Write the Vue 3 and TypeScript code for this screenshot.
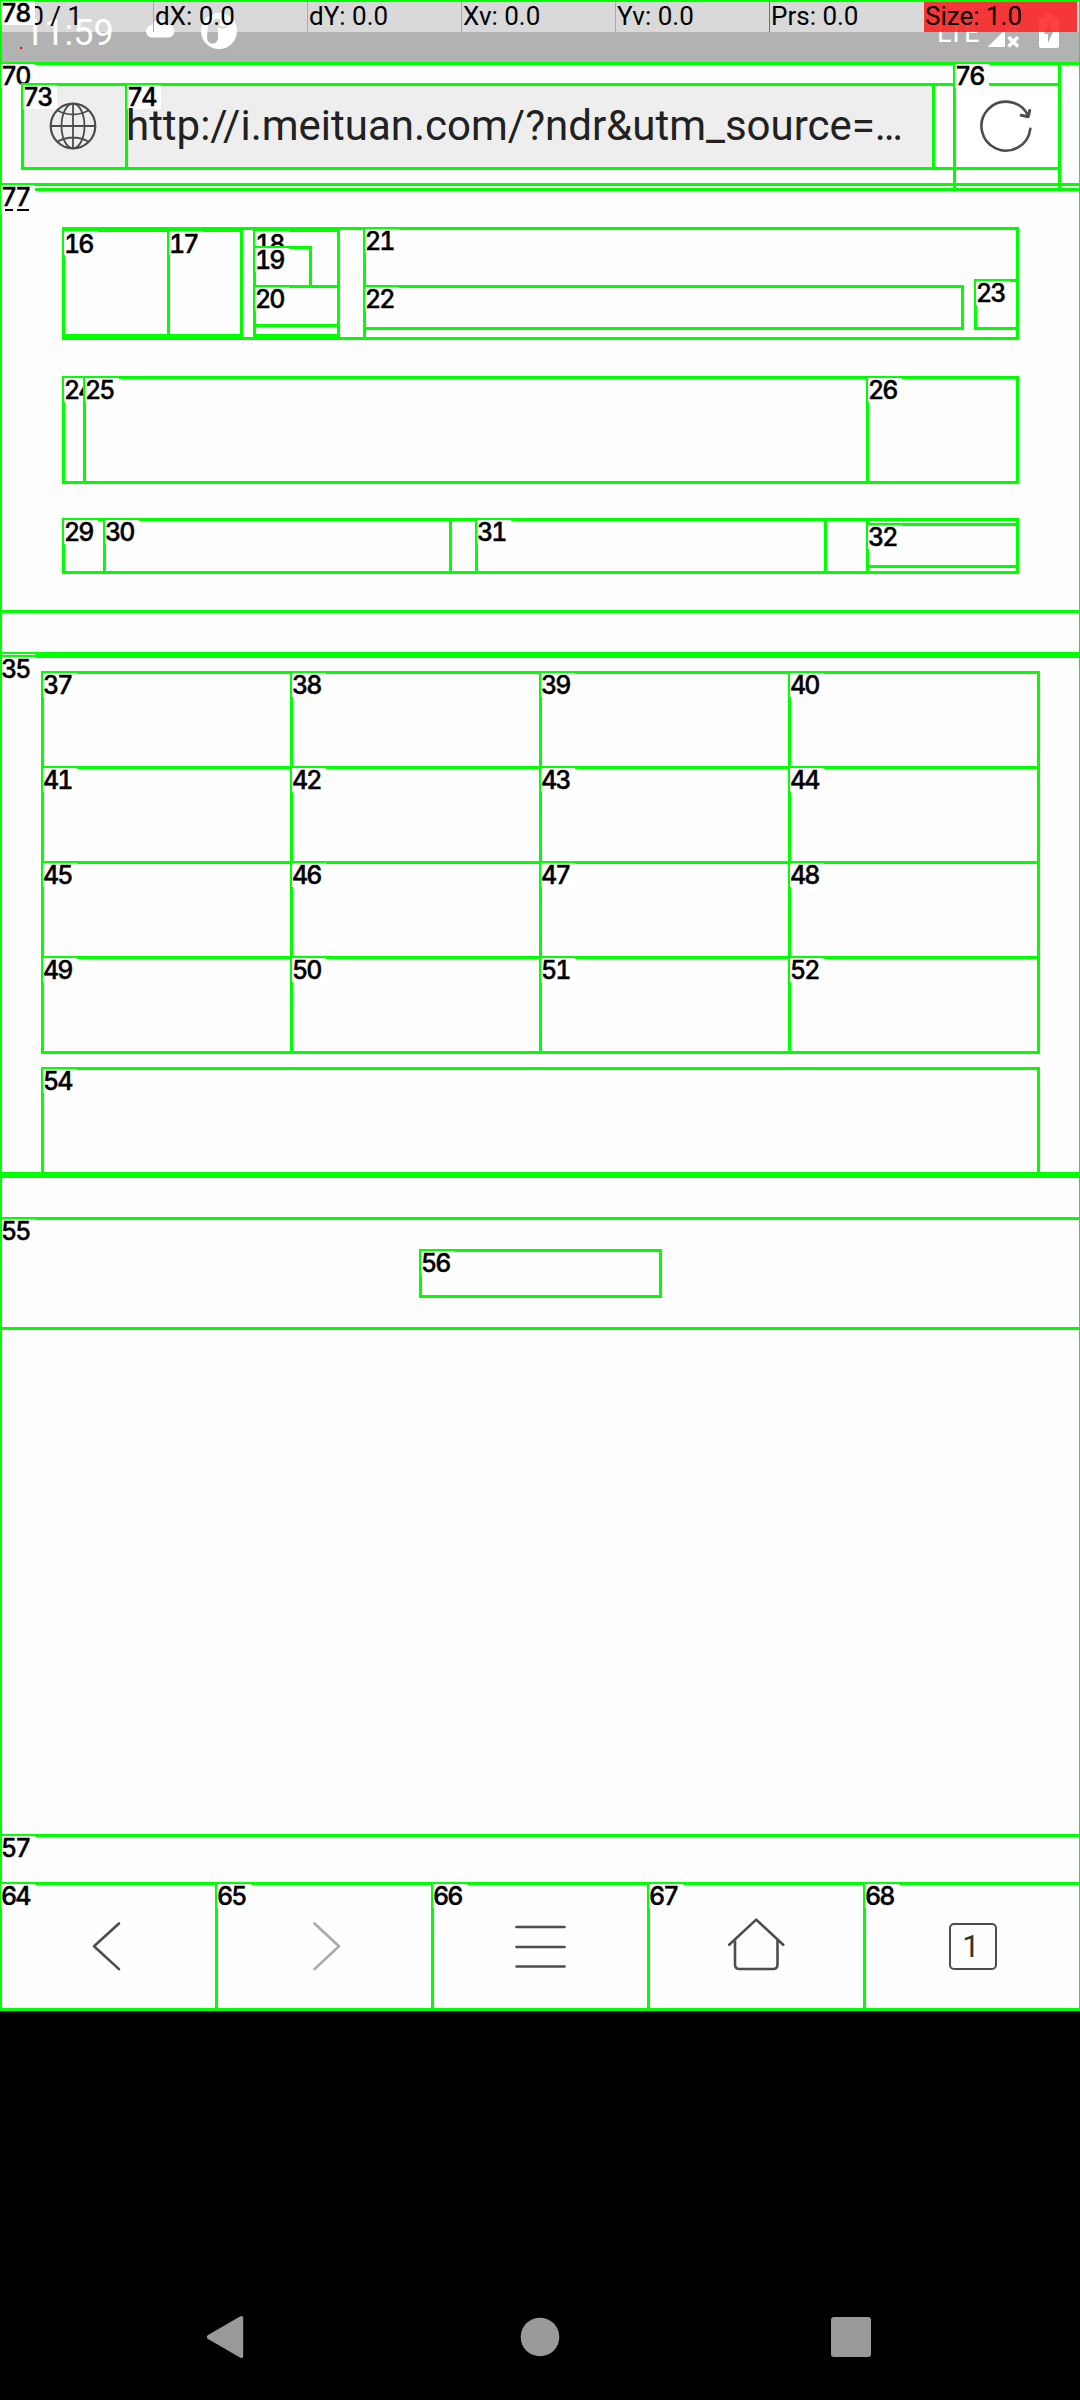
<script setup lang="ts">
const readouts: string[] = ['P: 0 / 1', 'dX: 0.0', 'dY: 0.0', 'Xv: 0.0', 'Yv: 0.0', 'Prs: 0.0', 'Size: 1.0']
const gridCells: string[] = Array.from({ length: 16 }, (_, i) => String(37 + i))
</script>

<template>
  <div class="page">
    <div class="frame"></div>

    <header class="status">
      <div class="status-row">
        <span class="clock">11:59</span>
        <svg class="cloud" width="30" height="24" viewBox="0 0 30 24">
          <path d="M6.500 22.500a6.200 6.200 0 0 1-.6-12.400A9 9 0 0 1 22.600 10a6.300 6.300 0 0 1 .4 12.500z" fill="#fff" />
        </svg>
        <svg class="app" width="38" height="38" viewBox="0 0 38 38">
          <circle cx="19" cy="19" r="18" fill="#fff" />
          <path d="M8 12h4l2-5h4v19a5.500 5.500 0 0 1-11 0z" fill="#b2b2b2" />
          <path d="M19 7v7a6 6 0 0 0 10-4" fill="none" stroke="#b2b2b2" stroke-width="2" />
        </svg>
        <span class="lte">LTE</span>
        <svg class="signal" width="36" height="36" viewBox="0 0 36 36">
          <path d="M1.500 35H19V18L1.500 35z" fill="#fff" />
          <path d="M19 18L33 4v16H19z" fill="#fff" opacity=".6" />
          <path d="M22.500 25l9.500 9.500M32 25l-9.500 9.500" stroke="#fff" stroke-width="3.600" />
        </svg>
        <svg class="battery" width="20" height="34" viewBox="0 0 20 34">
          <path d="M6 0h8v3.500h4q2 0 2 2V32q0 2-2 2H2q-2 0-2-2V5.500q0-2 2-2h4z" fill="#fff" />
          <path d="M11 8L5 20h4v9l6-13h-4z" fill="#b2b2b2" />
        </svg>
      </div>
      <div class="readouts">
        <span v-for="(r, i) in readouts" :key="r" :class="['readout', { warn: i === 5, hot: i === 6 }]">{{ r }}</span>
      </div>
      <i class="dot"></i>
      <span class="tag edge t78">78</span>
    </header>

    <section class="address">
      <span class="tag edge">70</span>
      <div class="url-row">
        <div class="site-icon">
          <span class="tag">73</span>
          <svg width="50" height="50" viewBox="0 0 50 50" fill="none" stroke="#4d4d4d" stroke-width="1.800">
            <circle cx="25" cy="25" r="22.300" stroke-width="2.200" />
            <ellipse cx="25" cy="25" rx="11.500" ry="22.300" />
            <path d="M25 3v44M3 25h44M9.500 9.500q15.500 8 31 0M9.500 40.500q15.500-8 31 0" />
          </svg>
        </div>
        <div class="url">
          <span class="tag">74</span>
          <span class="url-text">http://i.meituan.com/?ndr&amp;utm_source=…</span>
        </div>
        <div class="reload box">
          <span class="tag">76</span>
          <svg width="60" height="60" viewBox="0 0 60 60" fill="none" stroke="#4d4d4d" stroke-width="2.600" stroke-linecap="round" stroke-linejoin="round">
            <path d="M54.300 32.800A24.500 24.500 0 1 1 51.500 18.500" />
            <path d="M53.700 14.500l-1.500 6.200-7-1.400" stroke-width="3" />
          </svg>
        </div>
      </div>
    </section>

    <main class="web">
      <span class="tag edge t77">77<i class="dash d1"></i><i class="dash d2"></i></span>

      <div class="row row-a box">
        <div class="box b16"><span class="tag low">16</span></div>
        <div class="box b17"><span class="tag low">17</span></div>
        <div class="box b18">
          <span class="tag low">18</span>
          <div class="box b19"><span class="tag">19</span></div>
          <div class="box b20"><span class="tag">20</span></div>
        </div>
        <div class="box b21">
          <span class="tag">21</span>
          <div class="box b22"><span class="tag">22</span></div>
          <div class="box b23"><span class="tag">23</span></div>
        </div>
      </div>

      <div class="row row-b box">
        <div class="box b24"><span class="tag">24</span></div>
        <div class="box b25"><span class="tag">25</span></div>
        <div class="box b26"><span class="tag">26</span></div>
      </div>

      <div class="row row-c box">
        <div class="box b29"><span class="tag">29</span></div>
        <div class="box b30"><span class="tag">30</span></div>
        <div class="box b31"><span class="tag">31</span></div>
        <div class="box b32-wrap">
          <div class="box b32"><span class="tag">32</span></div>
        </div>
      </div>

      <div class="rule r1"></div>
      <div class="rule r2"></div>

      <section class="band b35">
        <span class="tag band-tag">35</span>
        <div class="grid">
          <div v-for="c in gridCells" :key="c" class="box cell"><span class="tag">{{ c }}</span></div>
        </div>
        <div class="box b54"><span class="tag">54</span></div>
      </section>
      <div class="rule"></div>

      <section class="band b55">
        <span class="tag band-tag">55</span>
        <div class="box b56"><span class="tag">56</span></div>
      </section>

      <section class="b57"><span class="tag band-tag">57</span></section>
    </main>

    <nav class="toolbar">
      <div class="box tool">
        <span class="tag">64</span>
        <svg width="80" height="60" viewBox="0 0 80 60"><path d="M51 7.200L26 30l25 22.800" transform="translate(0 .3)" /></svg>
      </div>
      <div class="box tool">
        <span class="tag">65</span>
        <svg class="dim" width="80" height="60" viewBox="0 0 80 60"><path d="M30.500 7.200L55 30 30.500 52.800" transform="translate(0 .3)" /></svg>
      </div>
      <div class="box tool">
        <span class="tag">66</span>
        <svg width="80" height="60" viewBox="0 0 80 60"><path d="M16.500 11h48M16.500 31h48M16.500 50.500h48" /></svg>
      </div>
      <div class="box tool">
        <span class="tag">67</span>
        <svg width="80" height="60" viewBox="0 0 80 60"><path d="M13.200 28.800L40.200 3.600l27 25.200M19 24.500v24q0 4.500 4.500 4.500h33.500q4.500 0 4.500-4.500v-24" /></svg>
      </div>
      <div class="box tool">
        <span class="tag">68</span>
        <span class="tabs">1</span>
      </div>
    </nav>

    <footer class="system">
      <svg width="48" height="48" viewBox="0 0 48 48"><path d="M7 22L39 3.500q3.200-1.500 3.200 1.500v38q0 3-3.200 1.500L7 26q-2.500-2 0-4z" fill="#999" /></svg>
      <svg width="48" height="48" viewBox="0 0 48 48"><circle cx="24" cy="24" r="19.300" fill="#999" /></svg>
      <svg width="48" height="48" viewBox="0 0 48 48"><rect x="4" y="4" width="40" height="40" rx="3" fill="#999" /></svg>
    </footer>
  </div>
</template>

<style>
body { margin: 0; background: #000; }
</style>

<style scoped>
.page {
  --line: #00ff00;
  position: relative;
  width: 1080px;
  height: 2400px;
  overflow: hidden;
  display: flex;
  flex-direction: column;
  background: #000;
  font-family: Roboto, "Liberation Sans", sans-serif;
}
.page * { box-sizing: border-box; flex-shrink: 0; }
svg { display: block; }

.frame {
  position: absolute;
  inset: 0 0 389px 0;
  border: solid var(--line);
  border-width: 2px 1px 0 2px;
  z-index: 1;
  pointer-events: none;
}
.box { position: relative; border: 3px solid var(--line); }
.tag {
  position: absolute;
  left: -1px;
  top: -1px;
  width: 34px;
  height: 24px;
  background: #fff;
  color: #000;
  font: 500 25px/24px Inter, "DejaVu Sans", sans-serif;
  font-variant-numeric: tabular-nums;
  letter-spacing: -1.9px;
  -webkit-text-stroke: .4px #000;
  white-space: nowrap;
}
.low { line-height: 26px; }
.edge { z-index: 2; left: 1px; }
.band-tag { left: 2px; width: 33px; text-indent: -1px; }

/* status bar */
.status { position: relative; height: 62px; background: #b2b2b2; }
.status-row { display: flex; align-items: flex-start; height: 62px; padding-left: 24px; color: #fff; }
.clock { width: 122px; margin-top: 12px; font-size: 36px; line-height: 42px; }
.cloud { margin-top: 15px; }
.app { margin: 12px 0 0 24px; }
.lte { width: 50px; margin: 17px 0 0 699px; font-size: 27px; line-height: 32px; }
.signal { margin: 12px 0 0 -1px; }
.battery { margin: 14px 0 0 17px; }
.readouts { position: absolute; inset: 0 0 auto 0; display: flex; height: 32px; background: rgba(255, 255, 255, .5); }
.readout {
  width: 154px;
  padding-left: 1px;
  border-right: 1px solid #aaa;
  color: #000;
  font-size: 26px;
  line-height: 32px;
  white-space: nowrap;
}
.readout:nth-child(5) { border-right-color: #ec3a3a; }
.readout:first-child { padding-left: 0; }
.readout.warn { border-right: 0; }
.readout.hot { border-right: 0; background: rgba(255, 0, 0, .75); }
.readout:nth-child(7) { width: 153px; }
.dot { position: absolute; left: 20px; top: 47px; width: 2px; height: 2px; background: #f00; }
.t78 { top: 1px; }

/* address bar */
.address {
  position: relative;
  height: 124px;
  border: solid var(--line);
  border-width: 3px 0;
  background: #fff;
  padding: 18px 0 0 21px;
}
.url-row { position: relative; z-index: 2; display: flex; width: 1040px; height: 87px; border: 3px solid var(--line); }
.site-icon { position: relative; display: flex; width: 104px; height: 81px; border-right: 3px solid var(--line); background: #eee; padding: 15px 0 0 24px; }
.url { position: relative; width: 807px; height: 81px; border-right: 3px solid var(--line); background: #eee; }
.url-text { position: relative; display: block; margin-left: -2px; padding-top: 16px; font-size: 42px; line-height: 48px; color: #212121; white-space: nowrap; }
.reload { width: 108px; height: 129px; margin: -24px 0 0 18px; padding: 31px 0 0 20px; }

/* page */
.web { position: relative; height: 1696px; border-top: 2px solid #fff; background: #fefefe; }
.web::before { content: ""; display: block; height: 3px; background: var(--line); }
.t77 { top: -3px; height: 29px; line-height: 25px; }
.dash { position: absolute; top: 24px; height: 2px; background: #000; }
.d1 { left: 4px; width: 8px; }
.d2 { left: 16px; width: 12px; }

.row { display: flex; align-items: flex-start; width: 957px; margin-left: 62px; }
.row > .box { margin-left: -3px; margin-top: -3px; }
.row-a { margin-top: 36px; height: 113px; }
.row-a > .b16 { width: 108px; height: 108px; margin-top: -1px; }
.row-a > .b17 { width: 76px; height: 108px; margin-top: -1px; }
.row-a > .b18 { width: 87px; height: 108px; margin: -1px 0 0 10px; padding-top: 14px; }
.b19 { width: 59px; height: 42px; margin-left: -3px; }
.b20 { width: 87px; height: 42px; margin: -3px 0 0 -3px; }
.row-a > .b21 { display: flex; width: 656px; height: 113px; margin-left: 23px; }
.b22 { width: 601px; height: 45px; margin: 55px 0 0 -3px; }
.b23 { width: 45px; height: 51px; margin: 49px 0 0 10px; }
.row-b { margin-top: 36px; height: 108px; }
.row-b > .box { height: 108px; }
.b24 { width: 24px; }
.b25 { width: 786px; }
.b26 { width: 153px; }
.row-c { margin-top: 34px; height: 56px; }
.row-c > .box { height: 56px; }
.b29 { width: 44px; }
.b30 { width: 349px; }
.row-c > .b31 { width: 352px; margin-left: 23px; }
.row-c > .b32-wrap { width: 153px; margin-left: 39px; padding-top: 2px; }
.b32 { width: 153px; height: 45px; margin-left: -3px; }

.rule { height: 3px; background: var(--line); }
.r1 { margin-top: 36px; }
.r2 { position: relative; margin-top: 39px; }
.r2::after { content: ""; position: absolute; left: 2px; top: 2px; width: 33px; height: 1px; background: #fff; }
.band { position: relative; border: solid var(--line); border-width: 3px 0; }
.b35 { height: 520px; padding: 13px 0 0 41px; }
.grid { display: grid; grid-template-columns: repeat(4, 249px); grid-template-rows: repeat(4, 95px); height: 383px; }
.cell { width: 252px; height: 98px; }
.b54 { width: 999px; height: 108px; margin-top: 13px; }
.b55 { height: 113px; margin-top: 39px; padding: 29px 0 0 419px; }
.b56 { width: 243px; height: 49px; }
.b57 { position: relative; height: 48px; margin-top: 504px; border-top: 3px solid var(--line); }

/* browser toolbar */
.toolbar { position: relative; z-index: 2; display: flex; height: 129px; margin-left: -1px; background: #fefefe; }
.toolbar::after { content: ""; position: absolute; left: 1080px; top: 0; width: 1px; height: 129px; background: var(--line); }
.tool { display: flex; width: 219px; height: 129px; margin-right: -3px; padding: 31px 0 0 66px; }
.tool svg { fill: none; stroke: #4d4d4d; stroke-width: 2.6; stroke-linecap: round; stroke-linejoin: round; }
.tool svg.dim { stroke: #aaa; }
.tabs {
  width: 48px;
  height: 47px;
  margin: 7px 0 0 17px;
  padding-right: 4px;
  border: 2px solid #4d4d4d;
  border-radius: 5px;
  color: #333;
  font-size: 31px;
  line-height: 44px;
  text-align: center;
}

/* system navigation */
.system { display: flex; height: 389px; padding: 302px 0 0 201px; background: #000; }
.system svg:nth-child(2) { margin: 0 263px 0 267px; }
</style>
